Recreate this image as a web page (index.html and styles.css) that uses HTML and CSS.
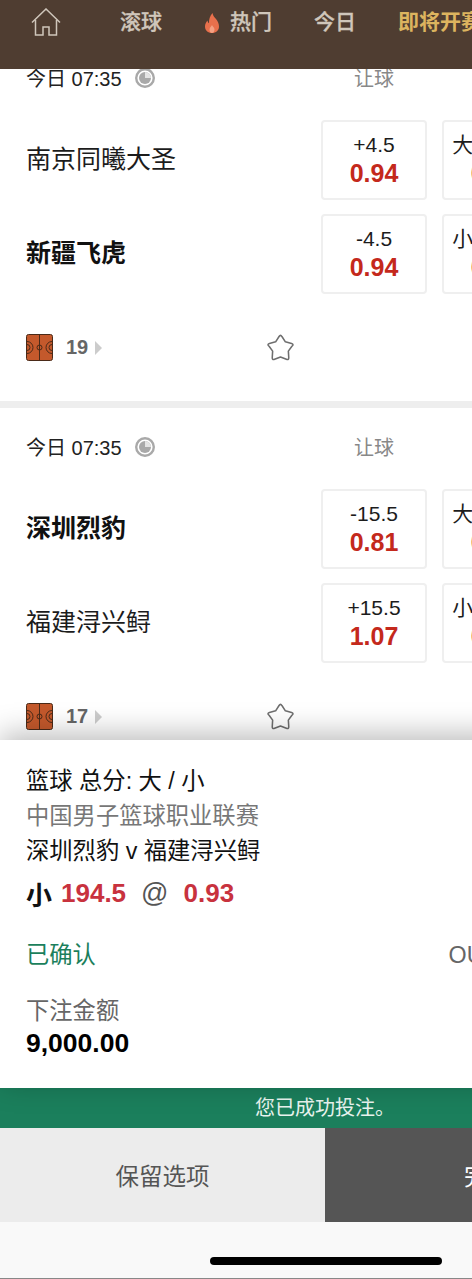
FILE: index.html
```html
<!DOCTYPE html>
<html lang="zh-CN">
<head>
    <meta charset="UTF-8">
    <meta name="viewport" content="width=device-width, initial-scale=1.0">
    <title>篮球投注</title>
    <link rel="stylesheet" href="styles.css">
</head>
<body>
    <div class="page">
        <nav class="nav">
            <svg class="nav-home" viewBox="0 0 30 28" fill="none" stroke="#cfc6bb" stroke-width="1.5">
                <path d="M1 14.5 15 1l14 13.5"/>
                <path d="M4.5 12v15h7.500v-8h6v8h7.500V12"/>
            </svg>
            <a class="nav-item">滚球</a>
            <a class="nav-item">
                <svg class="nav-fire" viewBox="0 0 16 20">
                    <path fill="#e8704c" d="M8.500 0c.5 3 2 4 3.500 6 1.500 2 3 4 3 7.500C15 17.500 12 20 8 20s-7-2.500-7-6.500c0-2.500 1.200-4.500 2.500-6 .2 1.500.7 2.300 1.500 2.800C4.800 6.500 6 3 8.500 0z"/>
                    <path fill="#f4a183" d="M8 12c.4 1.200 2.500 2.500 2.500 4.500S9.300 20 8 20s-2.500-1.500-2.500-3.500S7.500 13.500 8 12z"/>
                </svg>
                热门
            </a>
            <a class="nav-item">今日</a>
            <a class="nav-item nav-active">即将开赛</a>
        </nav>

        <main class="events">
            <section class="card">
                <div class="card-head">
                    <div class="kickoff">
                        <span>今日 07:35</span>
                        <svg class="clock" viewBox="0 0 20 20">
                            <circle cx="10" cy="10" r="8.800" fill="none" stroke="#a9a9a9" stroke-width="2.400"/>
                            <circle cx="10" cy="10" r="6" fill="#a9a9a9"/>
                            <path fill="#e4e4e4" d="M10 10V4a6 6 0 0 1 6 6z"/>
                        </svg>
                    </div>
                    <div class="market">让球</div>
                </div>
                <div class="row">
                    <div class="team">南京同曦大圣</div>
                    <div class="odds">
                        <div class="box"><span class="line">+4.5</span><span class="price">0.94</span></div>
                        <div class="box"><span class="line">大 170.5</span><span class="price">0.93</span></div>
                    </div>
                </div>
                <div class="row">
                    <div class="team team-fav">新疆飞虎</div>
                    <div class="odds">
                        <div class="box"><span class="line">-4.5</span><span class="price">0.94</span></div>
                        <div class="box"><span class="line">小 170.5</span><span class="price">0.93</span></div>
                    </div>
                </div>
                <div class="card-foot">
                    <svg class="court" viewBox="0 0 27 27" fill="none" stroke="#4a2a18" stroke-width="1">
                        <rect x=".5" y=".5" width="26" height="26" rx="2" fill="#c4592c"/>
                        <path d="M13.500 1v25"/>
                        <circle cx="13.500" cy="13.500" r="2.500"/>
                        <path d="M1 7.500a6 6 0 0 1 0 12M1 10.500a3 3 0 0 1 3 3 3 3 0 0 1-3 3M26 7.500a6 6 0 0 0 0 12M26 10.500a3 3 0 0 0-3 3 3 3 0 0 0 3 3"/>
                    </svg>
                    <span class="more">19</span>
                    <span class="more-arrow"></span>
                    <svg class="star" viewBox="0 0 28 28" fill="none" stroke="#6e6e6e" stroke-width="1.400" stroke-linejoin="round">
                        <path d="M15.300 4.100 18.400 8.900 24 10.400Q26.400 11 24.300 12.900L21.100 17.300 21.450 23Q21.600 25.500 19.300 24.600L14 22.500 8.700 24.600Q6.400 25.500 6.550 23L6.900 17.300 3.700 12.900Q1.600 11 4 10.400L9.600 8.900 12.700 4.100Q14 2 15.300 4.100z"/>
                    </svg>
                </div>
            </section>

            <section class="card">
                <div class="card-head">
                    <div class="kickoff">
                        <span>今日 07:35</span>
                        <svg class="clock" viewBox="0 0 20 20">
                            <circle cx="10" cy="10" r="8.800" fill="none" stroke="#a9a9a9" stroke-width="2.400"/>
                            <circle cx="10" cy="10" r="6" fill="#a9a9a9"/>
                            <path fill="#e4e4e4" d="M10 10V4a6 6 0 0 1 6 6z"/>
                        </svg>
                    </div>
                    <div class="market">让球</div>
                </div>
                <div class="row">
                    <div class="team team-fav">深圳烈豹</div>
                    <div class="odds">
                        <div class="box"><span class="line">-15.5</span><span class="price">0.81</span></div>
                        <div class="box"><span class="line">大 194.5</span><span class="price">0.93</span></div>
                    </div>
                </div>
                <div class="row">
                    <div class="team">福建浔兴鲟</div>
                    <div class="odds">
                        <div class="box"><span class="line">+15.5</span><span class="price">1.07</span></div>
                        <div class="box"><span class="line">小 194.5</span><span class="price">0.93</span></div>
                    </div>
                </div>
                <div class="card-foot">
                    <svg class="court" viewBox="0 0 27 27" fill="none" stroke="#4a2a18" stroke-width="1">
                        <rect x=".5" y=".5" width="26" height="26" rx="2" fill="#c4592c"/>
                        <path d="M13.500 1v25"/>
                        <circle cx="13.500" cy="13.500" r="2.500"/>
                        <path d="M1 7.500a6 6 0 0 1 0 12M1 10.500a3 3 0 0 1 3 3 3 3 0 0 1-3 3M26 7.500a6 6 0 0 0 0 12M26 10.500a3 3 0 0 0-3 3 3 3 0 0 0 3 3"/>
                    </svg>
                    <span class="more">17</span>
                    <span class="more-arrow"></span>
                    <svg class="star" viewBox="0 0 28 28" fill="none" stroke="#6e6e6e" stroke-width="1.400" stroke-linejoin="round">
                        <path d="M15.300 4.100 18.400 8.900 24 10.400Q26.400 11 24.300 12.900L21.100 17.300 21.450 23Q21.600 25.500 19.300 24.600L14 22.500 8.700 24.600Q6.400 25.500 6.550 23L6.900 17.300 3.700 12.900Q1.600 11 4 10.400L9.600 8.900 12.700 4.100Q14 2 15.300 4.100z"/>
                    </svg>
                </div>
            </section>
        </main>

        <section class="receipt">
            <div class="bet-type">篮球 总分: 大 / 小</div>
            <div class="bet-league">中国男子篮球职业联赛</div>
            <div class="bet-match">深圳烈豹 v 福建浔兴鲟</div>
            <div class="bet-pick">
                <span class="pick-side">小</span>
                <span class="pick-num">194.5</span>
                <span class="pick-at">@</span>
                <span class="pick-num">0.93</span>
            </div>
            <div class="bet-status">
                <span class="status-ok">已确认</span>
                <span class="status-ref">OU20391847265</span>
            </div>
            <div class="stake-label">下注金额</div>
            <div class="stake-value">9,000.00</div>
        </section>

        <div class="notice">您已成功投注。</div>
        <div class="actions">
            <button class="btn btn-keep">保留选项</button>
            <button class="btn btn-done">完成</button>
        </div>
        <div class="home-area"><span class="home-bar"></span></div>
    </div>
</body>
</html>
```

FILE: styles.css
```css
html, body {
    margin: 0;
    width: 472px;
    height: 1279px;
    overflow: hidden;
}
body {
    font-family: "Liberation Sans", "Noto Sans CJK SC", sans-serif;
    background-color: #fff;
    color: #111;
}
.page {
    width: 650px;
    height: 1279px;
    display: flex;
    flex-direction: column;
}

/* top nav */
.nav {
    flex: 0 0 69px;
    box-sizing: border-box;
    display: flex;
    align-items: flex-start;
    gap: 42px;
    padding: 8px 0 0 31px;
    background-color: #4f3d31;
    position: relative;
    z-index: 2;
}
.nav-home {
    width: 30px;
    height: 28px;
    margin-right: 17px;
}
.nav-item {
    display: flex;
    align-items: center;
    gap: 10px;
    height: 24px;
    font-size: 21px;
    font-weight: 500;
    -webkit-text-stroke: 0.3px #cfc6bb;
    color: #cfc6bb;
    white-space: nowrap;
}
.nav-fire {
    width: 16px;
    height: 20px;
    margin-top: 6px;
}
.nav-active {
    color: #dcb45f;
    font-weight: 700;
    -webkit-text-stroke: 0;
}

/* event list, scrolled under the nav */
.events {
    flex: 0 0 671px;
    overflow: hidden;
}
.card {
    box-sizing: border-box;
    height: 369px;
    border-bottom: 7px solid #eeeeee;
}
.card:first-child {
    margin-top: -30px;
}
.card-head {
    box-sizing: border-box;
    display: flex;
    align-items: center;
    height: 81px;
    padding: 0 0 4px 26px;
}
.kickoff {
    flex: 0 0 295px;
    display: flex;
    align-items: center;
    gap: 13px;
    font-size: 20px;
    color: #222;
}
.clock {
    width: 20px;
    height: 20px;
}
.market {
    flex: 0 0 106px;
    text-align: center;
    font-size: 20px;
    color: #888;
}
.row {
    display: flex;
    align-items: center;
    padding-left: 26px;
    margin-bottom: 14px;
}
.team {
    flex: 0 0 295px;
    box-sizing: border-box;
    padding-bottom: 7px;
    font-size: 25px;
    color: #1c1c1c;
}
.team-fav {
    font-weight: 700;
    color: #111;
}
.odds {
    display: flex;
    gap: 15px;
}
.box {
    box-sizing: border-box;
    width: 106px;
    height: 80px;
    padding-bottom: 2px;
    border: 2px solid #efefef;
    border-radius: 4px;
    display: flex;
    flex-direction: column;
    align-items: center;
    justify-content: center;
}
.line {
    font-size: 21px;
    line-height: 28px;
    word-spacing: 6px;
    color: #1c1c1c;
    white-space: nowrap;
}
.price {
    font-size: 25px;
    line-height: 28px;
    font-weight: 700;
    color: #c4291c;
}
.card-foot {
    display: flex;
    align-items: center;
    height: 27px;
    margin-top: 40px;
    padding-left: 26px;
}
.court {
    width: 27px;
    height: 27px;
}
.more {
    margin-left: 13px;
    font-size: 20px;
    font-weight: 700;
    color: #666;
}
.more-arrow {
    width: 0;
    height: 0;
    margin-left: 7px;
    border-style: solid;
    border-width: 7.500px 0 7.500px 7px;
    border-color: transparent transparent transparent #cccccc;
}
.star {
    width: 31px;
    height: 31px;
    margin-left: 163px;
}

/* bet receipt */
.receipt {
    flex: 0 0 348px;
    box-sizing: border-box;
    padding: 24px 24px 0 26px;
    background-color: #fff;
    box-shadow: 0 -6px 28px rgba(0, 0, 0, 0.27);
    position: relative;
    z-index: 1;
    font-size: 23.300px;
}
.bet-type,
.bet-league,
.bet-match {
    line-height: 35px;
}
.bet-league {
    color: #777;
}
.bet-pick {
    display: flex;
    align-items: center;
    height: 46px;
    margin: 1px 0 2px;
    font-size: 26px;
    font-weight: 700;
}
.pick-num {
    color: #c8323e;
    margin-left: 9px;
}
.pick-at {
    margin-left: 15px;
    margin-right: 6px;
    font-size: 27px;
    font-weight: 400;
    color: #555;
}
.bet-status {
    display: flex;
    justify-content: space-between;
    line-height: 34px;
    margin-top: 22px;
}
.status-ok {
    color: #1b7f5c;
}
.status-ref {
    color: #666;
}
.stake-label {
    margin-top: 22px;
    line-height: 34px;
    color: #666;
}
.stake-value {
    line-height: 30px;
    font-size: 26.500px;
    font-weight: 700;
    color: #000;
}

/* bottom */
.notice {
    flex: 0 0 40px;
    text-align: center;
    line-height: 40px;
    font-size: 20px;
    color: #e8f3ee;
    background-color: #1b7f5c;
}
.actions {
    flex: 0 0 94px;
    display: flex;
}
.btn {
    flex: 1;
    border: none;
    padding: 0;
    font-family: inherit;
    font-size: 23.500px;
}
.btn-keep {
    background-color: #ececec;
    color: #555;
}
.btn-done {
    background-color: #555555;
    color: #fff;
}
.home-area {
    flex: 1;
    background-color: #f9f9f9;
    border-bottom: 1px solid #888;
}
.home-bar {
    display: block;
    width: 232px;
    height: 8px;
    margin: 35px 0 0 210px;
    border-radius: 4px;
    background-color: #000;
}
```
